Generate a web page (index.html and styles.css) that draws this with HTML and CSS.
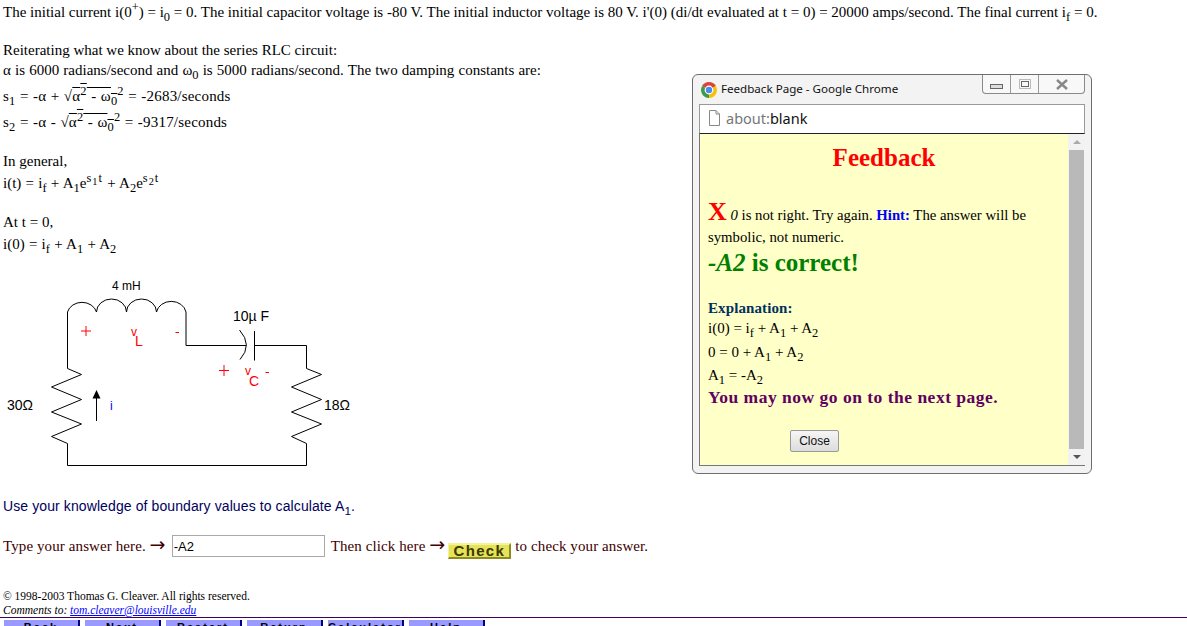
FILE: index.html
```html
<!DOCTYPE html>
<html lang="en">
<head>
    <meta charset="UTF-8">
    <title>Boundary Values</title>
    <link rel="stylesheet" href="styles.css">
</head>
<body>
    <div class="page">
        <p class="line first">The initial current i(0<sup>+</sup>) = i<sub>0</sub> = 0. The initial capacitor voltage is -80 V. The initial inductor voltage is 80 V. i'(0) (di/dt evaluated at t = 0) = 20000 amps/second. The final current i<sub>f</sub> = 0.</p>

        <div class="block known">
            <p class="line">Reiterating what we know about the series RLC circuit:</p>
            <p class="line constants">&alpha; is 6000 radians/second and &omega;<sub>0</sub> is 5000 radians/second. The two damping constants are:</p>
            <p class="line tall s1">s<sub>1</sub> = -&alpha; + &radic;<span class="root">&alpha;<sup>2</sup> - &omega;<sub>0</sub></span><sup>2</sup> = -2683/seconds</p>
            <p class="line tall">s<sub>2</sub> = -&alpha; - &radic;<span class="root">&alpha;<sup>2</sup> - &omega;<sub>0</sub></span><sup>2</sup> = -9317/seconds</p>
        </div>

        <div class="block general">
            <p class="line">In general,</p>
            <p class="line mid">i(t) = i<sub>f</sub> + A<sub>1</sub>e<sup>s<sub>1</sub>t</sup> + A<sub>2</sub>e<sup>s<sub>2</sub>t</sup></p>
        </div>

        <div class="block initial">
            <p class="line">At t = 0,</p>
            <p class="line mid">i(0) = i<sub>f</sub> + A<sub>1</sub> + A<sub>2</sub></p>
        </div>

        <svg class="circuit" width="350" height="210" viewBox="0 0 350 210">
            <g fill="none" stroke="#000" stroke-width="1">
                <path d="M67.5 42 A15 13 0 0 1 96.5 42 A15 13 0 0 1 126.5 42 A15 13 0 0 1 156.5 42 A15 13 0 0 1 186 42 V75.5 H246"/>
                <path d="M67.5 42 V98.5 L81.5 104.5 L51.5 117 L81.5 129.5 L51.5 142 L81.5 154 L51.5 166.5 L67.5 173.5 V195.5 H306.5 V173.5 L291.5 166.5 L321.5 154 L291.5 142 L321.5 129.5 L291.5 117 L321.5 104.5 L306.5 98.5 V75.5 H254"/>
                <path d="M254.5 61 V90.5"/>
                <path d="M239.5 60 Q253 75 240 89.500"/>
                <path d="M96.500 151 V125"/>
            </g>
            <path d="M96.500 120 L100.500 128.500 H92.500 Z" fill="#000"/>
            <g fill="none" stroke="#f00" stroke-width="1">
                <path d="M81 61 H91 M86 56 V66"/>
                <path d="M219 100.500 H229 M224 95 V106"/>
                <path d="M175.500 62.500 H179 M265.500 102.500 H269"/>
            </g>
            <text class="label" x="112" y="20">4 mH</text>
            <text class="label wide" x="233" y="51">10&micro; F</text>
            <text class="label wide" x="7" y="140">30&Omega;</text>
            <text class="label wide" x="324" y="140">18&Omega;</text>
            <text class="label red" x="131" y="66">v</text>
            <text class="label red wide" x="135" y="76">L</text>
            <text class="label red" x="245" y="105">v</text>
            <text class="label red wide" x="249" y="116">C</text>
            <text class="label blue" x="110" y="140">i</text>
        </svg>

        <p class="prompt">Use your knowledge of boundary values to calculate A<sub>1</sub>.</p>

        <form class="answer">
            <span>Type your answer here. <span class="arrow-glyph">&rarr;</span></span>
            <input class="answer-box" type="text" value="-A2">
            <span>Then click here <span class="arrow-glyph">&rarr;</span></span>
            <button class="check" type="button">Check</button>
            <span>to check your answer.</span>
        </form>

        <p class="copyright">&copy; 1998-2003 Thomas G. Cleaver. All rights reserved.</p>
        <p class="comments">Comments to: <a href="#">tom.cleaver@louisville.edu</a></p>
    </div>

    <nav class="nav">
        <a class="nav-btn" href="#">Back</a>
        <a class="nav-btn" href="#">Next</a>
        <a class="nav-btn" href="#">Restart</a>
        <a class="nav-btn" href="#">Return</a>
        <a class="nav-btn" href="#">Calculator</a>
        <a class="nav-btn" href="#">Help</a>
    </nav>

    <div class="popup">
        <div class="titlebar">
            <svg class="chrome-icon" width="16" height="16" viewBox="0 0 16 16">
                <path d="M8 8 L1.100 4 A8 8 0 0 1 14.900 4 Z" fill="#db4437"/>
                <path d="M8 8 L14.900 4 A8 8 0 0 1 8 16 Z" fill="#f4c20d"/>
                <path d="M8 8 L8 16 A8 8 0 0 1 1.100 4 Z" fill="#3e9c48"/>
                <circle cx="8" cy="8" r="3.800" fill="#4a8af4" stroke="#fff" stroke-width="1.200"/>
            </svg>
            <span class="win-title">Feedback Page - Google Chrome</span>
            <div class="win-controls">
                <span class="win-btn min"><i class="min-icon"></i></span>
                <span class="win-btn max"><i class="max-icon"></i></span>
                <span class="win-btn close">
                    <svg width="14" height="11" viewBox="0 0 14 11"><path d="M2 1 L12 10 M12 1 L2 10" stroke="#888" stroke-width="2.400" fill="none"/></svg>
                </span>
            </div>
        </div>
        <div class="addressbar">
            <svg width="13" height="16" viewBox="0 0 13 16"><path d="M1.500 .5 H8 L11.500 4 V15.500 H1.500 Z M8 .5 V4 H11.500" fill="#fff" stroke="#888"/></svg>
            <span class="url"><span class="scheme">about:</span>blank</span>
        </div>
        <div class="viewport">
            <div class="feedback">
                <h2 class="fb-title">Feedback</h2>
                <p class="fb-wrong"><b class="big-x">X</b> <i>0</i> is not right. Try again. <b class="hint">Hint:</b> The answer will be symbolic, not numeric.</p>
                <p class="fb-right"><i>-A2</i> is correct!</p>
                <p class="fb-expl-head">Explanation:</p>
                <p class="fb-line">i(0) = i<sub>f</sub> + A<sub>1</sub> + A<sub>2</sub></p>
                <p class="fb-line">0 = 0 + A<sub>1</sub> + A<sub>2</sub></p>
                <p class="fb-line">A<sub>1</sub> = -A<sub>2</sub></p>
                <p class="fb-next">You may now go on to the next page.</p>
                <button class="close-btn" type="button">Close</button>
            </div>
            <div class="scrollbar">
                <span class="arrow up"></span>
                <span class="thumb"></span>
                <span class="arrow down"></span>
            </div>
        </div>
    </div>
</body>
</html>
```

FILE: styles.css
```css
html, body {
    height: 100%;
    margin: 0;
    overflow: hidden;
}
body {
    font-family: "Liberation Serif", "Times New Roman", serif;
    font-size: 15px;
    color: #000;
    background: #fff;
}
p {
    margin: 0;
}
sub, sup {
    font-size: 83%;
    line-height: 0;
}
.page {
    height: 617px;
    padding-left: 3px;
    box-sizing: border-box;
    overflow: hidden;
}
.line {
    line-height: 20px;
}
.first {
    padding-top: 2px;
    white-space: nowrap;
}
.constants {
    word-spacing: .4px;
}
.tall {
    line-height: 26px;
    letter-spacing: .2px;
    word-spacing: .5px;
}
.s1 {
    margin-top: 3px;
}
.known {
    margin-top: 18px;
}
.general {
    margin-top: 16px;
}
.initial {
    margin-top: 19px;
}
.mid {
    margin-top: 2px;
    word-spacing: .5px;
}
.mid sup {
    letter-spacing: 1px;
}
.root {
    text-decoration: overline;
}
.circuit {
    display: block;
    margin: 16px 0 0 -3px;
}
.label {
    font-family: "Liberation Sans", Arial, sans-serif;
    font-size: 12px;
}
.wide {
    font-size: 14px;
}
.red {
    fill: #f00;
}
.blue {
    fill: #00f;
}
.prompt {
    font-family: "Liberation Sans", Arial, sans-serif;
    font-size: 14px;
    letter-spacing: .1px;
    line-height: 20px;
    color: #000060;
    margin-top: 16px;
}
.answer {
    display: flex;
    align-items: center;
    margin-top: 18px;
    height: 24px;
    color: #400000;
    letter-spacing: .1px;
    white-space: nowrap;
}
.arrow-glyph {
    font-family: "DejaVu Sans", sans-serif;
    font-size: 19px;
    line-height: 0;
}
.answer-box {
    width: 153px;
    height: 22px;
    box-sizing: border-box;
    margin: 0 6px 0 6px;
    padding: 1px 1px;
    border: 1px solid #a9a9a9;
    font-family: "Liberation Sans", Arial, sans-serif;
    font-size: 13px;
    color: #000;
}
.check {
    width: 63px;
    height: 16px;
    margin: 9px 4px 0 3px;
    padding: 0;
    border: none;
    border-top: 2px solid #f4f29a;
    border-left: 1px solid #f4f29a;
    border-right: 2px solid #8c8a20;
    border-bottom: 2px solid #8c8a20;
    background: #e6e35a;
    font-family: "Liberation Sans", Arial, sans-serif;
    font-size: 15px;
    font-weight: bold;
    line-height: 12px;
    letter-spacing: 1.300px;
    color: #3a3a00;
}
.copyright {
    margin-top: 32px;
    font-size: 11.500px;
    line-height: 13px;
}
.comments {
    font-size: 11.500px;
    font-style: italic;
    line-height: 14px;
}
.comments a {
    color: #00f;
}
.nav {
    display: flex;
    gap: 5px;
    padding: 2px 0 0 4px;
    border-top: 1px solid #400060;
    height: 7px;
    overflow: hidden;
}
.nav-btn {
    width: 76px;
    height: 20px;
    flex: none;
    box-sizing: border-box;
    background: #9999ff;
    border-right: 2px solid #000080;
    text-align: center;
    font-family: "Liberation Sans", Arial, sans-serif;
    font-size: 11px;
    font-weight: bold;
    letter-spacing: 2px;
    line-height: 15px;
    color: #000;
    text-decoration: none;
}
.popup {
    position: absolute;
    left: 692px;
    top: 74px;
    width: 400px;
    height: 400px;
    box-sizing: border-box;
    display: flex;
    flex-direction: column;
    padding: 0 6px 7px 6px;
    background: #f3f3f3;
    border: 1px solid #6e6e6e;
    border-radius: 6px;
}
.titlebar {
    display: flex;
    align-items: center;
    height: 29px;
    flex: none;
    padding-left: 2px;
}
.chrome-icon {
    margin-right: 4px;
}
.win-title {
    margin-top: -2px;
    font-family: "Noto Sans", "Open Sans", sans-serif;
    font-size: 11.600px;
    color: #111;
}
.win-controls {
    margin-left: auto;
    align-self: flex-start;
    display: flex;
    height: 18px;
    border: 1px solid #8a8a8a;
    border-top: none;
    border-radius: 0 0 4px 4px;
    background: #f8f8f8;
}
.win-btn {
    display: flex;
    align-items: center;
    justify-content: center;
    width: 27px;
    border-right: 1px solid #9a9a9a;
}
.win-btn.close {
    width: 45px;
    border-right: none;
}
.min-icon {
    display: block;
    width: 11px;
    height: 3px;
    margin-top: 4px;
    border: 1px solid #666;
    background: #ddd;
}
.max-icon {
    display: block;
    width: 6px;
    height: 4px;
    border: 1px solid #666;
    outline: 1px solid #bbb;
    outline-offset: 1px;
}
.addressbar {
    display: flex;
    align-items: center;
    gap: 5px;
    height: 30px;
    flex: none;
    box-sizing: border-box;
    padding: 0 0 2px 8px;
    background: #fff;
    border: 1px solid #9a9a9a;
    border-bottom: 1px solid #222;
}
.url {
    font-family: "Noto Sans", "Open Sans", sans-serif;
    font-size: 14.500px;
    color: #111;
}
.scheme {
    color: #777;
}
.viewport {
    flex: 1;
    display: flex;
    min-height: 0;
    background: #ffffc8;
    border-left: 1px solid #777;
    border-bottom: 1px solid #777;
}
.feedback {
    flex: 1;
    padding: 0 8px;
    overflow: hidden;
}
.fb-title {
    margin: 9px 0 0;
    font-size: 25px;
    line-height: 30px;
    text-align: center;
    color: #f00;
}
.fb-wrong {
    margin-top: 29px;
    line-height: 22px;
    font-size: 14.750px;
}
.big-x {
    font-size: 26px;
    line-height: 20px;
    color: #f00;
}
.hint {
    color: #00f;
}
.fb-right {
    margin-top: 1px;
    font-size: 25px;
    font-weight: bold;
    line-height: 28px;
    color: #008000;
}
.fb-expl-head {
    margin-top: 22px;
    font-size: 15px;
    letter-spacing: .1px;
    font-weight: bold;
    line-height: 18px;
    color: #003060;
}
.fb-line {
    line-height: 23.500px;
}
.fb-next {
    margin-top: -3px;
    font-size: 17.500px;
    font-weight: bold;
    line-height: 24px;
    letter-spacing: .5px;
    color: #600060;
}
.close-btn {
    display: block;
    width: 49px;
    height: 22px;
    margin: 21px 0 0 82px;
    padding: 0;
    border: 1px solid #999;
    border-radius: 2px;
    background: linear-gradient(#f6f6f6, #dcdcdc);
    font-family: "Liberation Sans", Arial, sans-serif;
    font-size: 12px;
    color: #111;
}
.scrollbar {
    width: 17px;
    flex: none;
    display: flex;
    flex-direction: column;
    background: #f2f2f2;
}
.thumb {
    flex: 1;
    margin: 0 1px;
    background: #b9b9b9;
}
.arrow {
    height: 16px;
    flex: none;
    display: flex;
    align-items: center;
    justify-content: center;
}
.arrow::before {
    content: "";
    border-left: 4px solid transparent;
    border-right: 4px solid transparent;
}
.arrow.up::before {
    border-bottom: 4px solid #aaa;
}
.arrow.down::before {
    border-top: 4px solid #555;
}
```
